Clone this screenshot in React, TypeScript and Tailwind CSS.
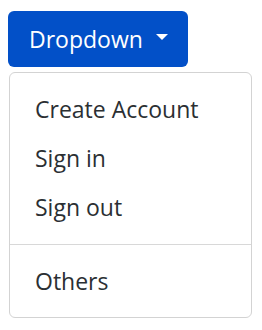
import React from "react";

export default function App() {
  const items = ["Create Account", "Sign in", "Sign out"];
  return (
    <div className="min-h-[330px] w-[262px] bg-white pl-2 pt-[11px]" style={{ fontFamily: '"Open Sans", "Noto Sans", sans-serif' }}>
      <button className="flex h-[56px] w-[180px] items-center rounded-[6px] bg-[#0250c8] pl-[21px] text-[23px] text-white">
        <span className="leading-none">Dropdown</span>
        <svg className="ml-[13px] mt-[-4px]" width="12" height="6" viewBox="0 0 12 6">
          <path d="M0 0 L12 0 L6 6 Z" fill="white" />
        </svg>
      </button>
      <div className="mt-[5px] ml-[1px] w-[243px] rounded-[6px] border border-[#d3d3d3] bg-white pt-3 pb-[11px] text-[23px] text-[#2b2f33]">
        {items.map((t) => (
          <div key={t} className="flex h-[49px] items-center pl-[25px]">
            {t}
          </div>
        ))}
        <div className="my-3 h-px bg-[#d8d8d8]" />
        <div className="flex h-[49px] items-center pl-[25px]">Others</div>
      </div>
    </div>
  );
}
